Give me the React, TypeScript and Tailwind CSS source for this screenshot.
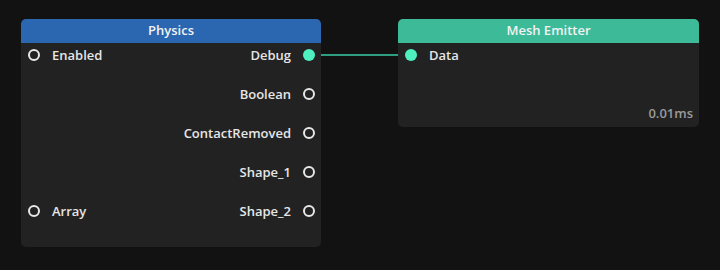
import React from "react";

type Port = { label: string; active?: boolean };

function Dot({ active }: { active?: boolean }) {
  return active ? (
    <span className="block w-[12px] h-[12px] rounded-full bg-[#4ff0c0] flex-shrink-0" />
  ) : (
    <span className="block w-[12px] h-[12px] rounded-full border-2 border-[#e8e8e8] flex-shrink-0" />
  );
}

function PortLabel({ text }: { text: string }) {
  return <span className="text-[13px] font-semibold text-[#e6e6e6] leading-none">{text}</span>;
}

const physicsRows: { left?: Port; right?: Port }[] = [
  { left: { label: "Enabled" }, right: { label: "Debug", active: true } },
  { right: { label: "Boolean" } },
  { right: { label: "ContactRemoved" } },
  { right: { label: "Shape_1" } },
  { left: { label: "Array" }, right: { label: "Shape_2" } },
];

export default function App() {
  return (
    <div
      className="relative w-[720px] h-[270px] bg-[#121212] overflow-hidden"
      style={{ fontFamily: '"Open Sans", "Noto Sans", sans-serif' }}
    >
      {/* wire between Debug and Data */}
      <svg className="absolute left-0 top-0" width="720" height="270">
        <line x1="314" y1="55" x2="405" y2="55" stroke="#2f9e80" strokeWidth="2" />
      </svg>

      {/* Physics node */}
      <div className="absolute left-[21px] top-[19px] w-[300px] h-[228px] rounded-[5px] bg-[#222222] overflow-hidden flex flex-col">
        <div className="h-[24px] bg-[#2b66b1] flex items-center justify-center text-[13px] font-semibold text-[#f2f2f2]">
          Physics
        </div>
        <div className="flex flex-col gap-[15px]">
          {physicsRows.map((row, i) => (
            <div key={i} className="h-[24px] flex items-center justify-between">
              <div className="flex items-center gap-[12px] pl-[7px]">
                {row.left && (
                  <>
                    <Dot active={row.left.active} />
                    <PortLabel text={row.left.label} />
                  </>
                )}
              </div>
              <div className="flex items-center gap-[12px] pr-[6px]">
                {row.right && (
                  <>
                    <PortLabel text={row.right.label} />
                    <Dot active={row.right.active} />
                  </>
                )}
              </div>
            </div>
          ))}
        </div>
      </div>

      {/* Mesh Emitter node */}
      <div className="absolute left-[398px] top-[19px] w-[301px] h-[108px] rounded-[5px] bg-[#222222] overflow-hidden flex flex-col">
        <div className="h-[24px] bg-[#3dba98] flex items-center justify-center text-[13px] font-semibold text-[#f2f2f2]">
          Mesh Emitter
        </div>
        <div className="h-[24px] flex items-center gap-[12px] pl-[7px]">
          <Dot active />
          <PortLabel text="Data" />
        </div>
        <div className="flex-1 flex items-end justify-end pr-[6px] pb-[4px]">
          <span className="text-[13px] font-semibold text-[#9a9a9a]">0.01ms</span>
        </div>
      </div>
    </div>
  );
}
